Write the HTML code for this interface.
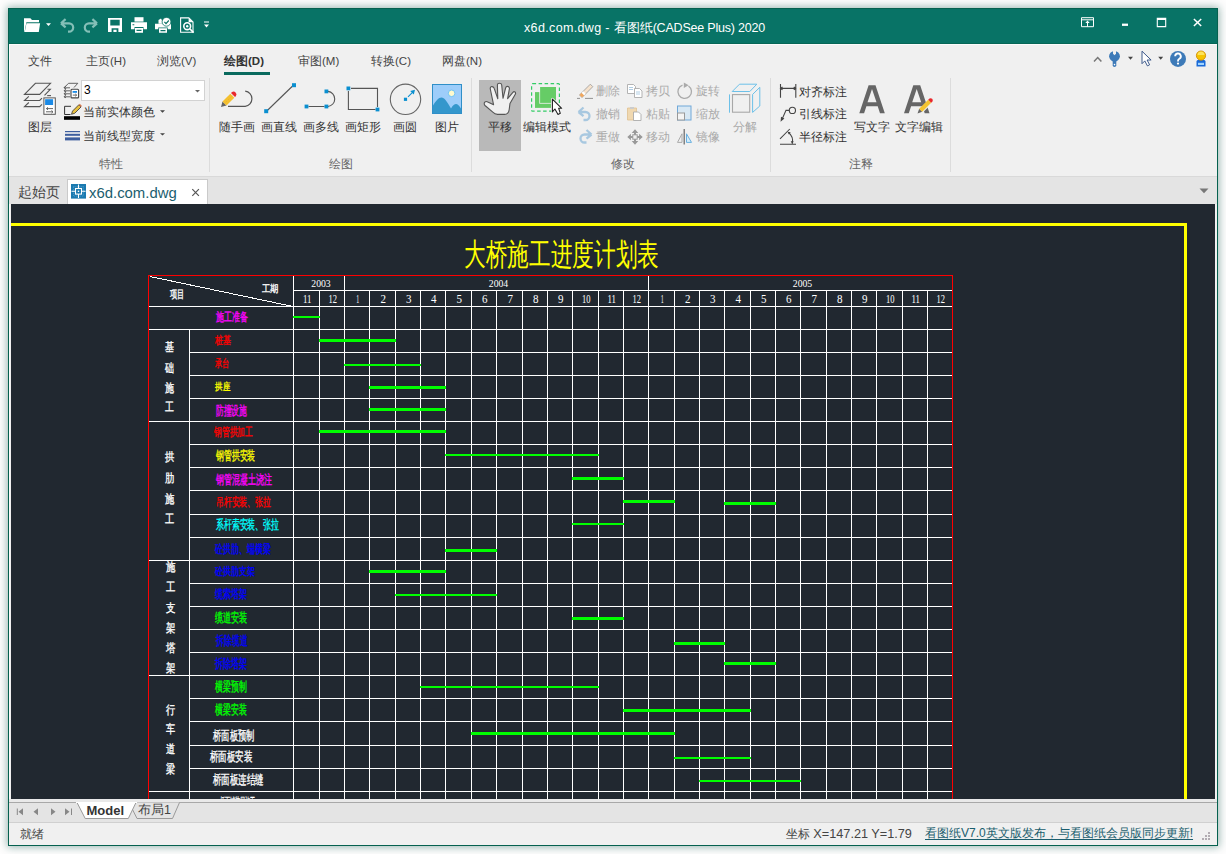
<!DOCTYPE html>
<html><head><meta charset="utf-8">
<style>
*{box-sizing:border-box}
html,body{margin:0;padding:0;width:1226px;height:854px;overflow:hidden;background:#fdfdfd;font-family:"Liberation Sans",sans-serif}
.a{position:absolute}
svg.a{overflow:visible}
#win{left:8px;top:8px;width:1210px;height:838px;background:#f0f0f0;border:1px solid #05614f;box-shadow:0 0 8px 1px rgba(10,80,70,0.42)}
#title{left:8px;top:8px;width:1210px;height:36px;background:#087366;border:1px solid #05614f;border-bottom-color:#066656}
.t{position:absolute;white-space:nowrap;font-size:12px;color:#333;line-height:1}
.m{font-size:11.5px;top:55.5px;color:#444}
.r{font-size:11.5px;color:#333}
.g{font-size:11.5px;color:#666;top:158.5px}
.d{font-size:11.5px;color:#aaa}
</style></head><body>
<div id="win" class="a"></div>
<div id="title" class="a"></div>
<div class="a" style="left:9px;top:44px;width:1208px;height:1px;background:#fbfbfb"></div>
<div class="a" style="left:9px;top:44px;width:1px;height:801px;background:#fbfbfb"></div>
<!--TITLEBAR-->
<svg class="a" style="left:0;top:0" width="220" height="43" viewBox="0 0 220 43">
 <!-- folder -->
 <path d="M24 18.2h6.4l1.6 1.8h7v2.2h-12.6l-1.9 9.8h-0.5z" fill="#fff"/>
 <path d="M26.5 23.2h13.6l-1.3 8.8h-14.1z" fill="#fff"/>
 <path d="M46 23.2h5l-2.5 2.8z" fill="#fff"/>
 <!-- undo -->
 <path d="M61 23.3l4.6-4.2M61 23.3l4.6 4M61.5 23.3h7.5a4.2 4.2 0 0 1 0 8.4h-1" fill="none" stroke="#84bfb7" stroke-width="2.2"/>
 <!-- redo -->
 <path d="M97 23.3l-4.6-4.2M97 23.3l-4.6 4M96.5 23.3h-7.5a4.2 4.2 0 0 0 0 8.4h1" fill="none" stroke="#84bfb7" stroke-width="2.2"/>
 <!-- save -->
 <path d="M108 18h14v14h-14z M110.3 19.8v5.6h9.4v-5.6z M111.6 28.2v3.8h1.8v-2.2h3.2v2.2h1.8v-3.8z" fill="#fff" fill-rule="evenodd"/>
 <!-- printer -->
 <path d="M134.5 17.2h9v4.4h-9z" fill="#fff"/>
 <path d="M131 22.2h16v7h-3.5v-2.2h-9v2.2h-3.5z M132.5 24.3h1.8v1h-1.8z" fill="#fff" fill-rule="evenodd"/>
 <path d="M135 28h8v4.8h-8z M136.5 29.8v1.2h5v-1.2z" fill="#fff" fill-rule="evenodd"/>
 <!-- print check -->
 <path d="M158.5 20l2.5-1.5 1.8 3.2v2h-4.3z" fill="#fff"/>
 <path d="M155 23.8h16v5.4h-3.3v-1.8h-9.4v1.8h-3.3z" fill="#fff"/>
 <path d="M159 28.2h8v4.6h-8z M160.5 30v1.2h5v-1.2z" fill="#fff" fill-rule="evenodd"/>
 <circle cx="166.5" cy="21.8" r="4.4" fill="#fff" stroke="#0a7364" stroke-width="0.8"/>
 <path d="M164.4 21.9l1.6 1.7 2.8-3.1" fill="none" stroke="#0a7364" stroke-width="1.2"/>
 <!-- preview doc -->
 <path d="M180.6 17.9h8.2l4.2 4.2v10.2h-12.4z" fill="none" stroke="#fff" stroke-width="1.1"/>
 <path d="M188.6 18v4.3h4.3z" fill="#fff"/>
 <circle cx="187.2" cy="26.2" r="3.4" fill="none" stroke="#fff" stroke-width="1.6"/>
 <circle cx="187.2" cy="26.2" r="1.2" fill="#fff"/>
 <path d="M189.8 28.8l3.8 3.8" stroke="#fff" stroke-width="1.6"/>
 <!-- customize -->
 <path d="M204 21.6h5v1h-5z M204 24.5h5l-2.5 3z" fill="#fff"/>
</svg>
<div class="t" style="left:524px;top:21.5px;color:#fff;font-size:12.5px"><span style="letter-spacing:0.35px">x6d.com.dwg - </span>看图纸<span style="letter-spacing:-0.2px">(CADSee Plus) 2020</span></div>
<svg class="a" style="left:1070px;top:8px" width="148" height="35" viewBox="1070 8 148 35">
 <path d="M1081.5 17.7h12v9h-12z M1081.5 19.8h12 M1087.5 21.3v5.4" fill="none" stroke="#fff" stroke-width="1"/>
 <path d="M1087.5 20.6l-2.2 2.3h4.4z" fill="#fff"/>
 <path d="M1122 23.6h6v2.3h-6z" fill="#fff"/>
 <path d="M1157.3 18.4h8.4v8.2h-8.4z" fill="none" stroke="#fff" stroke-width="1.1"/>
 <path d="M1157 18h9v2h-9z" fill="#fff"/>
 <path d="M1193.9 19l7.3 7M1201.2 19l-7.3 7" stroke="#fff" stroke-width="1.5"/>
</svg>
<!--RIBBONTABS-->
<div class="t m" style="left:28px">文件</div>
<div class="t m" style="left:86px">主页(H)</div>
<div class="t m" style="left:157px">浏览(V)</div>
<div class="t m" style="left:224px;font-weight:bold;color:#333">绘图(D)</div>
<div class="a" style="left:224px;top:72px;width:46px;height:3px;background:#0a6a5e"></div>
<div class="t m" style="left:298px">审图(M)</div>
<div class="t m" style="left:371px">转换(C)</div>
<div class="t m" style="left:442px">网盘(N)</div>
<!--RIBBON-->
<!-- group separators -->
<div class="a" style="left:209px;top:78px;width:1px;height:94px;background:#dcdcdc"></div>
<div class="a" style="left:471px;top:78px;width:1px;height:94px;background:#dcdcdc"></div>
<div class="a" style="left:770px;top:78px;width:1px;height:94px;background:#dcdcdc"></div>
<div class="a" style="left:950px;top:78px;width:1px;height:94px;background:#dcdcdc"></div>
<!-- group labels -->
<div class="t g" style="left:99px">特性</div>
<div class="t g" style="left:329px">绘图</div>
<div class="t g" style="left:611px">修改</div>
<div class="t g" style="left:849px">注释</div>
<!-- pan highlight -->
<div class="a" style="left:479px;top:80px;width:42px;height:71px;background:#b9b9b9"></div>
<svg class="a" style="left:0;top:0" width="1226" height="176" viewBox="0 0 1226 176">
 <!-- layer big icon -->
 <g fill="none" stroke="#555" stroke-width="1.1">
  <path d="M24.5 94.4L35.4 83.3H50.5L39.7 94.4Z"/>
  <path d="M28.8 96.4L24.5 100.5H39.7L42 98.2"/>
  <path d="M28.8 102.5L24.5 106.6H39.7L42 104.3"/>
  <path d="M44.5 95.3L50.3 89.3H47.5"/>
  <path d="M47.2 95.6H51"/>
 </g>
 <rect x="43.9" y="97.9" width="11.4" height="16.4" fill="#fff" stroke="#555" stroke-width="1"/>
 <rect x="45.1" y="99.2" width="8" height="5.8" fill="#1b8ae6"/>
 <path d="M46.5 108.6h6.5M46.5 108.6l1.5-1.3M46.5 108.6l1.5 1.3M46 111.8h6.5M53 111.8l-1.5-1.3M53 111.8l-1.5 1.3" fill="none" stroke="#555" stroke-width="0.9"/>
 <!-- small layer icon -->
 <g fill="none" stroke="#555" stroke-width="0.9">
  <path d="M64 87.8l4.5-4.5h9.3l-3.8 4.2"/>
  <path d="M64 87.8h6M66 85.8l-2 2 2 1"/>
  <path d="M64 90.8h6M64 93.8h6M64 96.8h6M66 88.8l-2 2 2 1M66 91.8l-2 2 2 1M66 94.8l-2 2 2 1"/>
 </g>
 <rect x="71" y="89.3" width="7.6" height="8.6" rx="1" fill="#fff" stroke="#444" stroke-width="1.1"/>
 <rect x="72.6" y="91" width="4.4" height="1.8" fill="#1b8ae6"/>
 <path d="M72.8 95.1h3.8M75.3 93.9l1.3 1.2-1.3 1.2" fill="none" stroke="#444" stroke-width="0.8"/>
 <!-- combo -->
 <rect x="81.5" y="80.5" width="123" height="20" fill="#fff" stroke="#d2d2d2" stroke-width="1"/>
 <path d="M195 90h5l-2.5 2.6z" fill="#666"/>
 <!-- color icon -->
 <path d="M71 106.3H64.6V114.5H70.5" fill="none" stroke="#333" stroke-width="1"/>
 <path d="M71.5 114.3l1-3.2 6.3-6.3 2.2 2.2-6.3 6.3z" fill="#e8c040" stroke="#333" stroke-width="0.8"/>
 <path d="M78.8 104.8l1-1 2.2 2.2-1 1z" fill="#d77a50"/>
 <rect x="64" y="116.2" width="16" height="3.6" fill="#000"/>
 <path d="M160 110.3h5l-2.5 2.4z M160 133.2h5l-2.5 2.4z" fill="#444"/>
 <!-- linewidth icon -->
 <rect x="65" y="131" width="15" height="1.2" fill="#3d5e9e"/>
 <rect x="65" y="133.8" width="15" height="2" fill="#3d5e9e"/>
 <rect x="65" y="137.4" width="15" height="3" fill="#3d5e9e"/>
 <!-- freehand -->
 <path d="M245.2 91.2a7.6 7.6 0 0 1 0 15.1H228" fill="none" stroke="#555" stroke-width="1.2"/>
 <path d="M221 107l1.5-5.5 4 4z" fill="#666"/>
 <path d="M222.5 101.5l7.8-7.8 4 4-7.8 7.8z" fill="#f4c030"/>
 <path d="M224.5 103.5l7.8-7.8" stroke="#e0a820" stroke-width="0.6" stroke-dasharray="1 1.5"/>
 <path d="M231 93l0.8-0.8a2.85 2.85 0 0 1 4 4l-0.8 0.8z" fill="#e8282c"/>
 <!-- line -->
 <path d="M267.3 110.5L292.6 86" stroke="#555" stroke-width="1.1"/>
 <rect x="264.2" y="109.2" width="4" height="4" fill="#0a8fd0"/>
 <rect x="292" y="83.2" width="4" height="4" fill="#0a8fd0"/>
 <!-- polyline -->
 <path d="M308.5 106.5h16M328 91.4a7.6 7.6 0 0 1 0 15.1" fill="none" stroke="#555" stroke-width="1.1"/>
 <rect x="304.6" y="104.6" width="3.8" height="3.8" fill="#0a8fd0"/>
 <rect x="324.5" y="104.6" width="3.8" height="3.8" fill="#0a8fd0"/>
 <rect x="324.5" y="89.5" width="3.8" height="3.8" fill="#0a8fd0"/>
 <!-- rect -->
 <path d="M351 88.4H377.5V107M375.5 109.5H348.4V91" fill="none" stroke="#555" stroke-width="1.1"/>
 <rect x="346.5" y="86.5" width="3.8" height="3.8" fill="#0a8fd0"/>
 <rect x="375.6" y="107.6" width="3.8" height="3.8" fill="#0a8fd0"/>
 <!-- circle -->
 <circle cx="405.5" cy="99.3" r="15.2" fill="none" stroke="#666" stroke-width="1.1"/>
 <rect x="403.9" y="97.7" width="3.2" height="3.2" fill="#0a8fd0"/>
 <path d="M408 96.8l5.5-5.5" stroke="#0a8fd0" stroke-width="1.1"/>
 <path d="M415 89.8l-1.2 4.8-3.6-3.6z" fill="#0a8fd0"/>
 <!-- image -->
 <rect x="432.5" y="84.5" width="29" height="29" fill="#9dcdfa" stroke="#2f8fc8" stroke-width="1"/>
 <path d="M433 105.5C436 101 438.5 97.5 441.5 97.5S446.5 101 451 108.5C453 105 454.5 104 456 104S459.5 106 461 108.5V113H433z" fill="#3497cc"/>
 <circle cx="451.6" cy="93.3" r="3.3" fill="#fffacd" stroke="#70c4f5" stroke-width="1"/>
 <!-- hand -->
 <path transform="translate(480,80)" d="M13.6 24.8L10.3 9.0C10.0 7.2 11.0 6.4 12.2 6.6C13.4 6.8 14.0 7.6 14.2 8.4L17.8 18.7L17.4 5.0C17.4 3.6 18.3 3.2 19.4 3.2C20.6 3.2 21.6 4.0 21.7 5.0L23.0 18.3L25.6 8.0C26.0 6.6 26.8 6.2 27.7 6.4C28.8 6.6 29.6 7.6 29.4 8.8L27.6 18.7L32.9 12.3C33.5 11.6 34.4 11.5 35.0 12.0C35.7 12.6 35.7 13.5 35.3 14.2L30.0 23.4L29.2 29.5C28.8 32.5 27.0 34.4 24.5 34.4L17.5 34.4C15.5 34.4 14.0 33.5 12.8 32.2L5.0 25.5C4.0 24.6 4.0 23.0 4.8 22.2C5.6 21.4 6.8 21.4 7.8 22.0Z" fill="#f0f0f0" stroke="#555" stroke-width="1.1" stroke-linejoin="round"/>
 <!-- edit mode -->
 <rect x="531.6" y="83.6" width="27.8" height="27.6" rx="1" fill="none" stroke="#33cc66" stroke-width="1.2" stroke-dasharray="3.5 2.5"/>
 <rect x="535" y="92.1" width="16" height="15.8" fill="#66cc66"/>
 <rect x="539.3" y="86.3" width="17.5" height="17.4" fill="#f0f0f0"/>
 <rect x="540.1" y="87" width="15.9" height="15.9" fill="#66cc66"/>
 <path d="M552.4 99.2V111.9L554.9 109L558 114.4L560.3 113.3L558.7 108.3H561.7Z" fill="#fff" stroke="#f4f4f4" stroke-width="2.6" stroke-linejoin="round"/>
 <path d="M552.4 99.2V111.9L554.9 109L558 114.4L560.3 113.3L558.7 108.3H561.7Z" fill="#fff" stroke="#222" stroke-width="1.1" stroke-linejoin="round"/>
 <!-- modify small icons (disabled) -->
 <path d="M577 98.4h3M585 98.4h8" stroke="#888" stroke-width="0.9"/>
 <path d="M582 97.5l-2.5-2.5 10.8-10.8 2.5 2.5z" fill="#f6e2cc" stroke="#999" stroke-width="0.8"/>
 <path d="M582 97.5l-2.5-2.5 2.2-2.2 2.5 2.5z" fill="#f0a860"/>
 <path d="M584.2 95.3l-2.5-2.5 1.5-1.5 2.5 2.5z" fill="#fff"/>
 <path d="M578.5 112l5-4.5M578.5 112l5 4.2M579 112h6.5a4 4 0 0 1 0 8h-2" fill="none" stroke="#a8c8e0" stroke-width="2.3"/>
 <path d="M591.5 134.5l-5-4.5M591.5 134.5l-5 4.2M591 134.5h-6.5a4 4 0 0 0 0 8h2" fill="none" stroke="#a8c8e0" stroke-width="2.3"/>
 <g fill="#fff" stroke="#aaa" stroke-width="0.9">
  <path d="M627.5 84.5h6l2 2v7h-8z"/>
  <path d="M634.5 88.5h5l2.5 2.5v6.5h-7.5z"/>
 </g>
 <path d="M629 87.5h4M629 89.5h4M636 92h4M636 94h4" stroke="#9cc0dc" stroke-width="0.8"/>
 <path d="M627.5 108h9v12h-9z" fill="#f0d8b0" stroke="#e0c090" stroke-width="0.8"/>
 <path d="M630 107h4v2h-4z" fill="#ccc"/>
 <path d="M633.5 112h5l2.5 2.5v6h-7.5z" fill="#fff" stroke="#aaa" stroke-width="0.9"/>
 <path d="M630 137h10M635 132v10" stroke="#999" stroke-width="2"/>
 <path d="M627.3 137l3.6-3.3v6.6zM642.7 137l-3.6-3.3v6.6zM635 129.3l-3.3 3.6h6.6zM635 144.7l-3.3-3.6h6.6z" fill="#999"/>
 <rect x="632.8" y="134.8" width="4.4" height="4.4" fill="#f0f0f0" stroke="#999" stroke-width="1"/>
 <path d="M682.5 85.2A6.8 6.8 0 1 0 688.5 86" fill="none" stroke="#aaa" stroke-width="1.3"/>
 <path d="M683.8 82.6v5.4l4.8-2.7z" fill="#aaa"/>
 <rect x="677.5" y="106" width="13.5" height="14" fill="#d8e8f4" stroke="#70a8d8" stroke-width="1"/>
 <rect x="677.5" y="113" width="7" height="7" fill="#f4f4f4" stroke="#999" stroke-width="1"/>
 <path d="M684.2 129v15.5" stroke="#666" stroke-width="1.2"/>
 <path d="M682 142.4h-4.5l4.5-8.6z" fill="none" stroke="#aaa" stroke-width="1"/>
 <path d="M686.5 142.4h5l-5-8.6z" fill="#d6ecf8" stroke="#6ab0e0" stroke-width="1"/>
 <!-- explode cube -->
 <path d="M729.5 94.4V112.7M732.2 91.5L739.5 84.2H756.8L749.8 91.5ZM752.6 94.4L759.8 87.3V106L752.6 112.4Z" fill="none" stroke="#6cc0e8" stroke-width="1"/>
 <rect x="732.5" y="94.6" width="17.2" height="17.6" fill="none" stroke="#a8a8a8" stroke-width="1.1"/>
 <!-- annotation icons -->
 <path d="M780.5 84v13.8M795.8 84v13.8M780.5 88.4h15.3M782.5 87l-2 1.4 2 1.4M793.8 87l2 1.4-2 1.4" fill="none" stroke="#444" stroke-width="1.1"/>
 <circle cx="792.4" cy="110.4" r="3.1" fill="none" stroke="#444" stroke-width="1.1"/>
 <path d="M789.2 110.4h-3.2l-4.2 9.5" fill="none" stroke="#444" stroke-width="1.1"/>
 <path d="M780.6 121.8l0.4-5 3.4 1.6z" fill="#444"/>
 <path d="M780 138.8L789.8 129M780 144.3H796M788.5 132.5a11 11 0 0 1 3.8 11" fill="none" stroke="#444" stroke-width="1.05"/>
 <path d="M787.5 131.8l3.2 0.5-1.8 2.2zM792.3 144l-1.6-2.8h3z" fill="#444"/>
 <!-- big A icons -->
 <path d="M859.3 113.2L868.6 85.3h6.9L884.8 113.2h-4.8l-2.3-6.9h-11.3l-2.3 6.9zM867.5 102.3h9l-4.5-13.3z" fill="#666" fill-rule="evenodd"/>
 <path d="M904 113.2L913.3 85.3h6.9L929.5 113.2h-4.8l-2.3-6.9h-11.3l-2.3 6.9zM912.2 102.3h9l-4.5-13.3z" fill="#666" fill-rule="evenodd"/>
 <path d="M917 111.5l11.5-11.5 3.4 3.4-11.5 11.5z" fill="#f0f0f0"/>
 <path d="M917.5 113.5l1.7-4.7 3 3z" fill="#666"/>
 <path d="M919.2 108.8l9-9 3 3-9 9z" fill="#f4c430"/>
 <path d="M928.2 99.8l1.3-1.3a2.2 2.2 0 0 1 3 3l-1.3 1.3z" fill="#e8282c"/>
 <!-- top right icons -->
 <path d="M1094 61.5l3.7-4 3.7 4" fill="none" stroke="#777" stroke-width="1.5"/>
 <circle cx="1114.5" cy="56.3" r="5.4" fill="#3d7ab8"/>
 <path d="M1112.7 58h3.6v7.3a1.8 1.8 0 0 1-3.6 0z" fill="#3d7ab8"/>
 <path d="M1113 50.5h3v3.2l-1.5 1.6-1.5-1.6z" fill="#f0f0f0"/>
 <circle cx="1114.5" cy="64.6" r="0.8" fill="#fff"/>
 <path d="M1128 56.8h5l-2.5 3z M1158.2 56.8h5l-2.5 3z" fill="#444"/>
 <path d="M1142 51.2v12.5l2.8-2.8 2.6 5 2.2-1.1-2.5-4.8h4z" fill="#fff" stroke="#2a4a80" stroke-width="0.9"/>
 <circle cx="1178" cy="58.9" r="8" fill="#3d7ab8"/>
 <path d="M1175.2 56.3a2.8 2.8 0 1 1 4.2 2.4c-1 0.6-1.4 1.2-1.4 2.2v0.6" fill="none" stroke="#fff" stroke-width="1.9"/>
 <circle cx="1178" cy="63.6" r="1.1" fill="#fff"/>
 <path d="M1196.5 61.5c0-1 0.8-1.6 1.8-1.6h5.4c1 0 1.8 0.6 1.8 1.6v5h-9z" fill="#1a6ad8"/>
 <rect x="1198" y="62.8" width="6" height="2.2" fill="#9fd4ff"/>
 <circle cx="1201" cy="55.6" r="4.6" fill="#f5c400" stroke="#d08a00" stroke-width="0.9"/>
 <path d="M1197.5 55a3.5 3.5 0 0 1 7 0z" fill="#fde35a"/>
</svg>
<!-- ribbon texts -->
<div class="t r" style="left:28px;top:121.5px">图层</div>
<div class="t" style="left:84px;top:84px;font-size:12px;color:#000">3</div>
<div class="t r" style="left:83px;top:107.2px">当前实体颜色</div>
<div class="t r" style="left:83px;top:130.7px">当前线型宽度</div>
<div class="t r" style="left:219px;top:121.5px">随手画</div>
<div class="t r" style="left:261px;top:121.5px">画直线</div>
<div class="t r" style="left:303px;top:121.5px">画多线</div>
<div class="t r" style="left:345px;top:121.5px">画矩形</div>
<div class="t r" style="left:393px;top:121.5px">画圆</div>
<div class="t r" style="left:435px;top:121.5px">图片</div>
<div class="t r" style="left:488px;top:121.5px">平移</div>
<div class="t r" style="left:523px;top:121.5px">编辑模式</div>
<div class="t d" style="left:596px;top:86.3px">删除</div>
<div class="t d" style="left:596px;top:109.3px">撤销</div>
<div class="t d" style="left:596px;top:132.3px">重做</div>
<div class="t d" style="left:646px;top:86.3px">拷贝</div>
<div class="t d" style="left:646px;top:109.3px">粘贴</div>
<div class="t d" style="left:646px;top:132.3px">移动</div>
<div class="t d" style="left:696px;top:86.3px">旋转</div>
<div class="t d" style="left:696px;top:109.3px">缩放</div>
<div class="t d" style="left:696px;top:132.3px">镜像</div>
<div class="t d" style="left:733px;top:121.5px">分解</div>
<div class="t r" style="left:799px;top:87.3px">对齐标注</div>
<div class="t r" style="left:799px;top:109.3px">引线标注</div>
<div class="t r" style="left:799px;top:132.3px">半径标注</div>
<div class="t r" style="left:854px;top:121.5px">写文字</div>
<div class="t r" style="left:895px;top:121.5px">文字编辑</div>

<!--TABBAR-->
<div class="a" style="left:9px;top:176px;width:1208px;height:1px;background:#d9d9d9"></div>
<div class="a" style="left:9px;top:177px;width:1208px;height:27px;background:#e4e4e4"></div>
<div class="t" style="left:18px;top:185.5px;font-size:13.5px;color:#444">起始页</div>
<div class="a" style="left:67px;top:179px;width:141px;height:25px;background:#fff;border:1px solid #cacaca;border-bottom:none"></div>
<svg class="a" style="left:0;top:170px" width="220" height="34" viewBox="0 170 220 34">
 <rect x="71" y="184" width="15" height="14.6" fill="#1a7ab0"/>
 <rect x="73.5" y="186.5" width="10" height="9.6" fill="none" stroke="#7fc0e8" stroke-width="0.6" stroke-dasharray="0.8 1.2"/>
 <rect x="75.5" y="188.5" width="6" height="5.6" fill="none" stroke="#fff" stroke-width="1.1"/>
 <path d="M78.5 184.5v4M78.5 194.1v4M71.5 191.3h4M81.5 191.3h4" stroke="#fff" stroke-width="1.1"/>
 <rect x="77.8" y="190.6" width="1.4" height="1.4" fill="#fff"/>
 <path d="M192.3 189.2l6.6 6.6M198.9 189.2l-6.6 6.6" stroke="#555" stroke-width="1.2"/>
</svg>
<svg class="a" style="left:1190px;top:180px" width="30" height="20" viewBox="1190 180 30 20"><path d="M1199.5 188.5h9l-4.5 4.8z" fill="#777"/></svg>
<div class="t" style="left:89px;top:185.5px;font-size:14.9px;color:#1b5e6e">x6d.com.dwg</div>
<svg id="cad" width="1226" height="854" viewBox="0 0 1226 854" style="position:absolute;left:0;top:0">
<defs><clipPath id="dc"><rect x="11" y="204" width="1204" height="595"/></clipPath></defs>
<rect x="11" y="204" width="1204" height="595" fill="#212830"/>
<g clip-path="url(#dc)" shape-rendering="crispEdges">
<rect x="11" y="223" width="1176" height="3" fill="#ffff00"/>
<rect x="1184" y="223" width="3" height="600" fill="#ffff00"/>
<rect x="148" y="306" width="805" height="1" fill="#ffffff"/><rect x="148" y="329" width="805" height="1" fill="#ffffff"/><rect x="189" y="352" width="764" height="1" fill="#ffffff"/><rect x="189" y="375" width="764" height="1" fill="#ffffff"/><rect x="189" y="398" width="764" height="1" fill="#ffffff"/><rect x="148" y="421" width="805" height="1" fill="#ffffff"/><rect x="189" y="444" width="764" height="1" fill="#ffffff"/><rect x="189" y="467" width="764" height="1" fill="#ffffff"/><rect x="189" y="490" width="764" height="1" fill="#ffffff"/><rect x="189" y="514" width="764" height="1" fill="#ffffff"/><rect x="189" y="537" width="764" height="1" fill="#ffffff"/><rect x="148" y="560" width="805" height="1" fill="#ffffff"/><rect x="189" y="583" width="764" height="1" fill="#ffffff"/><rect x="189" y="606" width="764" height="1" fill="#ffffff"/><rect x="189" y="629" width="764" height="1" fill="#ffffff"/><rect x="189" y="652" width="764" height="1" fill="#ffffff"/><rect x="148" y="675" width="805" height="1" fill="#ffffff"/><rect x="189" y="698" width="764" height="1" fill="#ffffff"/><rect x="189" y="721" width="764" height="1" fill="#ffffff"/><rect x="189" y="745" width="764" height="1" fill="#ffffff"/><rect x="189" y="768" width="764" height="1" fill="#ffffff"/><rect x="148" y="791" width="805" height="1" fill="#ffffff"/><rect x="293" y="290" width="660" height="1" fill="#ffffff"/><rect x="293" y="275" width="1" height="556" fill="#ffffff"/><rect x="319" y="290" width="1" height="541" fill="#ffffff"/><rect x="344" y="275" width="1" height="556" fill="#ffffff"/><rect x="369" y="290" width="1" height="541" fill="#ffffff"/><rect x="395" y="290" width="1" height="541" fill="#ffffff"/><rect x="420" y="290" width="1" height="541" fill="#ffffff"/><rect x="445" y="290" width="1" height="541" fill="#ffffff"/><rect x="471" y="290" width="1" height="541" fill="#ffffff"/><rect x="496" y="290" width="1" height="541" fill="#ffffff"/><rect x="522" y="290" width="1" height="541" fill="#ffffff"/><rect x="547" y="290" width="1" height="541" fill="#ffffff"/><rect x="572" y="290" width="1" height="541" fill="#ffffff"/><rect x="598" y="290" width="1" height="541" fill="#ffffff"/><rect x="623" y="290" width="1" height="541" fill="#ffffff"/><rect x="648" y="275" width="1" height="556" fill="#ffffff"/><rect x="674" y="290" width="1" height="541" fill="#ffffff"/><rect x="699" y="290" width="1" height="541" fill="#ffffff"/><rect x="724" y="290" width="1" height="541" fill="#ffffff"/><rect x="750" y="290" width="1" height="541" fill="#ffffff"/><rect x="775" y="290" width="1" height="541" fill="#ffffff"/><rect x="800" y="290" width="1" height="541" fill="#ffffff"/><rect x="826" y="290" width="1" height="541" fill="#ffffff"/><rect x="851" y="290" width="1" height="541" fill="#ffffff"/><rect x="876" y="290" width="1" height="541" fill="#ffffff"/><rect x="902" y="290" width="1" height="541" fill="#ffffff"/><rect x="927" y="290" width="1" height="541" fill="#ffffff"/><rect x="189" y="329" width="1" height="502" fill="#ffffff"/>
<rect x="148" y="275" width="805" height="1" fill="#ff0000"/>
<rect x="148" y="275" width="1" height="555" fill="#ff0000"/>
<rect x="952" y="275" width="1" height="555" fill="#ff0000"/>
</g>
<g clip-path="url(#dc)" shape-rendering="crispEdges">
<line x1="150" y1="276.5" x2="293" y2="306.5" stroke="#fff" stroke-width="1"/>
<rect x="293" y="316" width="27" height="2" fill="#00ff00"/>
<rect x="319" y="339" width="77" height="3" fill="#00ff00"/>
<rect x="344" y="364" width="77" height="2" fill="#00ff00"/>
<rect x="369" y="386" width="77" height="3" fill="#00ff00"/>
<rect x="369" y="408" width="77" height="3" fill="#00ff00"/>
<rect x="319" y="430" width="127" height="3" fill="#00ff00"/>
<rect x="445" y="454" width="154" height="2" fill="#00ff00"/>
<rect x="572" y="477" width="52" height="3" fill="#00ff00"/>
<rect x="623" y="500" width="52" height="3" fill="#00ff00"/>
<rect x="724" y="502" width="52" height="3" fill="#00ff00"/>
<rect x="572" y="523" width="52" height="2" fill="#00ff00"/>
<rect x="445" y="549" width="52" height="3" fill="#00ff00"/>
<rect x="369" y="570" width="77" height="3" fill="#00ff00"/>
<rect x="395" y="594" width="102" height="2" fill="#00ff00"/>
<rect x="572" y="617" width="52" height="3" fill="#00ff00"/>
<rect x="674" y="642" width="51" height="3" fill="#00ff00"/>
<rect x="724" y="662" width="52" height="3" fill="#00ff00"/>
<rect x="420" y="686" width="179" height="2" fill="#00ff00"/>
<rect x="623" y="709" width="128" height="3" fill="#00ff00"/>
<rect x="471" y="732" width="204" height="3" fill="#00ff00"/>
<rect x="674" y="757" width="77" height="2" fill="#00ff00"/>
<rect x="699" y="780" width="102" height="2" fill="#00ff00"/>
</g>
<g clip-path="url(#dc)" font-family="Liberation Sans, sans-serif"><text x="464" y="265" font-size="31" textLength="195" lengthAdjust="spacingAndGlyphs" fill="#ffff00">大桥施工进度计划表</text><text x="170" y="297.6" font-size="11.1" textLength="14.3" lengthAdjust="spacingAndGlyphs" fill="#ffffff" stroke="#ffffff" stroke-width="0.35" font-weight="normal">项目</text><text x="261.7" y="291.8" font-size="9.9" textLength="16.7" lengthAdjust="spacingAndGlyphs" fill="#ffffff" stroke="#ffffff" stroke-width="0.35" font-weight="normal">工期</text><text x="215.9" y="321.3" font-size="12.4" textLength="32.1" lengthAdjust="spacingAndGlyphs" fill="#ff00ff" stroke="#ff00ff" stroke-width="0.35" font-weight="normal">施工准备</text><text x="215" y="343.5" font-size="11.2" textLength="16.0" lengthAdjust="spacingAndGlyphs" fill="#ff0000" stroke="#ff0000" stroke-width="0.35" font-weight="normal">桩基</text><text x="215" y="366.7" font-size="11.2" textLength="14.3" lengthAdjust="spacingAndGlyphs" fill="#ff0000" stroke="#ff0000" stroke-width="0.35" font-weight="normal">承台</text><text x="215" y="390.0" font-size="10.3" textLength="15.0" lengthAdjust="spacingAndGlyphs" fill="#ffff00" stroke="#ffff00" stroke-width="0.35" font-weight="normal">拱座</text><text x="215.9" y="415.0" font-size="13.0" textLength="31.2" lengthAdjust="spacingAndGlyphs" fill="#ff00ff" stroke="#ff00ff" stroke-width="0.35" font-weight="normal">防撞设施</text><text x="214.2" y="436.2" font-size="12.4" textLength="38.8" lengthAdjust="spacingAndGlyphs" fill="#ff0000" stroke="#ff0000" stroke-width="0.35" font-weight="normal">钢管拱加工</text><text x="215.8" y="459.6" font-size="13.3" textLength="39.6" lengthAdjust="spacingAndGlyphs" fill="#ffff00" stroke="#ffff00" stroke-width="0.35" font-weight="normal">钢管拱安装</text><text x="215.8" y="483.8" font-size="13.3" textLength="56.2" lengthAdjust="spacingAndGlyphs" fill="#ff00ff" stroke="#ff00ff" stroke-width="0.35" font-weight="normal">钢管混凝土浇注</text><text x="215.8" y="505.7" font-size="12.4" textLength="55.0" lengthAdjust="spacingAndGlyphs" fill="#ff0000" stroke="#ff0000" stroke-width="0.35" font-weight="normal">吊杆安装、张拉</text><text x="215.8" y="528.9" font-size="12.5" textLength="63.4" lengthAdjust="spacingAndGlyphs" fill="#00ffff" stroke="#00ffff" stroke-width="0.35" font-weight="normal">系杆索安装、张拉</text><text x="215" y="552.6" font-size="12.4" textLength="55.8" lengthAdjust="spacingAndGlyphs" fill="#0000ff" stroke="#0000ff" stroke-width="0.35" font-weight="normal">砼拱肋、端横梁</text><text x="214.9" y="575.4" font-size="10.8" textLength="40.3" lengthAdjust="spacingAndGlyphs" fill="#0000ff" stroke="#0000ff" stroke-width="0.35" font-weight="normal">砼拱肋支架</text><text x="214.9" y="598.2" font-size="12.2" textLength="32.5" lengthAdjust="spacingAndGlyphs" fill="#0000ff" stroke="#0000ff" stroke-width="0.35" font-weight="normal">缆索塔架</text><text x="214.9" y="622.0" font-size="12.7" textLength="32.5" lengthAdjust="spacingAndGlyphs" fill="#00ff00" stroke="#00ff00" stroke-width="0.35" font-weight="normal">缆道安装</text><text x="216.2" y="645.0" font-size="12.7" textLength="31.2" lengthAdjust="spacingAndGlyphs" fill="#0000ff" stroke="#0000ff" stroke-width="0.35" font-weight="normal">拆除缆道</text><text x="214.9" y="667.9" font-size="12.7" textLength="32.5" lengthAdjust="spacingAndGlyphs" fill="#0000ff" stroke="#0000ff" stroke-width="0.35" font-weight="normal">拆除塔架</text><text x="214.9" y="690.9" font-size="12.7" textLength="31.7" lengthAdjust="spacingAndGlyphs" fill="#00ff00" stroke="#00ff00" stroke-width="0.35" font-weight="normal">横梁预制</text><text x="215.1" y="713.8" font-size="12.9" textLength="31.6" lengthAdjust="spacingAndGlyphs" fill="#00ff00" stroke="#00ff00" stroke-width="0.35" font-weight="normal">横梁安装</text><text x="213" y="739.6" font-size="12.7" textLength="41.5" lengthAdjust="spacingAndGlyphs" fill="#ffffff" stroke="#ffffff" stroke-width="0.35" font-weight="normal">桥面板预制</text><text x="209.8" y="760.8" font-size="12.7" textLength="42.6" lengthAdjust="spacingAndGlyphs" fill="#ffffff" stroke="#ffffff" stroke-width="0.35" font-weight="normal">桥面板安装</text><text x="212.8" y="783.9" font-size="12.5" textLength="50.8" lengthAdjust="spacingAndGlyphs" fill="#ffffff" stroke="#ffffff" stroke-width="0.35" font-weight="normal">桥面板连结缝</text><text x="219.6" y="807.4" font-size="12.7" textLength="35.4" lengthAdjust="spacingAndGlyphs" fill="#ffffff" stroke="#ffffff" stroke-width="0.35" font-weight="normal">桥面铺装层施工</text><text x="165.4" y="351.4" font-size="12.1" textLength="9.0" lengthAdjust="spacingAndGlyphs" fill="#ffffff" stroke="#ffffff" stroke-width="0.35" font-weight="normal">基</text><text x="165.4" y="371.9" font-size="12.1" textLength="9.0" lengthAdjust="spacingAndGlyphs" fill="#ffffff" stroke="#ffffff" stroke-width="0.35" font-weight="normal">础</text><text x="165.4" y="391.7" font-size="12.1" textLength="9.0" lengthAdjust="spacingAndGlyphs" fill="#ffffff" stroke="#ffffff" stroke-width="0.35" font-weight="normal">施</text><text x="165.4" y="411.4" font-size="12.1" textLength="9.0" lengthAdjust="spacingAndGlyphs" fill="#ffffff" stroke="#ffffff" stroke-width="0.35" font-weight="normal">工</text><text x="165.3" y="461.4" font-size="12.1" textLength="9.3" lengthAdjust="spacingAndGlyphs" fill="#ffffff" stroke="#ffffff" stroke-width="0.35" font-weight="normal">拱</text><text x="165.3" y="481.9" font-size="12.1" textLength="9.3" lengthAdjust="spacingAndGlyphs" fill="#ffffff" stroke="#ffffff" stroke-width="0.35" font-weight="normal">肋</text><text x="165.3" y="503.0" font-size="12.1" textLength="9.3" lengthAdjust="spacingAndGlyphs" fill="#ffffff" stroke="#ffffff" stroke-width="0.35" font-weight="normal">施</text><text x="165.3" y="523.4" font-size="12.1" textLength="9.3" lengthAdjust="spacingAndGlyphs" fill="#ffffff" stroke="#ffffff" stroke-width="0.35" font-weight="normal">工</text><text x="166.2" y="571.1" font-size="12.1" textLength="9.4" lengthAdjust="spacingAndGlyphs" fill="#ffffff" stroke="#ffffff" stroke-width="0.35" font-weight="normal">施</text><text x="166.2" y="591.4" font-size="12.1" textLength="9.4" lengthAdjust="spacingAndGlyphs" fill="#ffffff" stroke="#ffffff" stroke-width="0.35" font-weight="normal">工</text><text x="166.2" y="611.8" font-size="12.1" textLength="9.4" lengthAdjust="spacingAndGlyphs" fill="#ffffff" stroke="#ffffff" stroke-width="0.35" font-weight="normal">支</text><text x="166.2" y="631.9" font-size="12.1" textLength="9.4" lengthAdjust="spacingAndGlyphs" fill="#ffffff" stroke="#ffffff" stroke-width="0.35" font-weight="normal">架</text><text x="166.2" y="652.4" font-size="12.1" textLength="9.4" lengthAdjust="spacingAndGlyphs" fill="#ffffff" stroke="#ffffff" stroke-width="0.35" font-weight="normal">塔</text><text x="166.2" y="671.8" font-size="12.1" textLength="9.4" lengthAdjust="spacingAndGlyphs" fill="#ffffff" stroke="#ffffff" stroke-width="0.35" font-weight="normal">架</text><text x="166" y="713.7" font-size="12.1" textLength="9.1" lengthAdjust="spacingAndGlyphs" fill="#ffffff" stroke="#ffffff" stroke-width="0.35" font-weight="normal">行</text><text x="166" y="733.4" font-size="12.1" textLength="9.1" lengthAdjust="spacingAndGlyphs" fill="#ffffff" stroke="#ffffff" stroke-width="0.35" font-weight="normal">车</text><text x="166" y="753.0" font-size="12.1" textLength="9.1" lengthAdjust="spacingAndGlyphs" fill="#ffffff" stroke="#ffffff" stroke-width="0.35" font-weight="normal">道</text><text x="166" y="773.0" font-size="12.1" textLength="9.1" lengthAdjust="spacingAndGlyphs" fill="#ffffff" stroke="#ffffff" stroke-width="0.35" font-weight="normal">梁</text><text x="311.3" y="286.8" font-family="Liberation Serif" font-size="11.2" textLength="19.4" lengthAdjust="spacingAndGlyphs" fill="#fff">2003</text><text x="488.8" y="286.8" font-family="Liberation Serif" font-size="11.2" textLength="19.4" lengthAdjust="spacingAndGlyphs" fill="#fff">2004</text><text x="792.8" y="286.8" font-family="Liberation Serif" font-size="11.2" textLength="19.4" lengthAdjust="spacingAndGlyphs" fill="#fff">2005</text><text x="302.9" y="302.8" font-family="Liberation Serif" font-size="11.6" textLength="8.5" lengthAdjust="spacingAndGlyphs" fill="#fff">11</text><text x="328.4" y="302.8" font-family="Liberation Serif" font-size="11.6" textLength="8.5" lengthAdjust="spacingAndGlyphs" fill="#fff">12</text><text x="356.2" y="302.8" font-family="Liberation Serif" font-size="11.6" textLength="3.0" lengthAdjust="spacingAndGlyphs" fill="#fff">1</text><text x="380.4" y="302.8" font-family="Liberation Serif" font-size="11.6" textLength="5.5" lengthAdjust="spacingAndGlyphs" fill="#fff">2</text><text x="405.9" y="302.8" font-family="Liberation Serif" font-size="11.6" textLength="5.5" lengthAdjust="spacingAndGlyphs" fill="#fff">3</text><text x="430.9" y="302.8" font-family="Liberation Serif" font-size="11.6" textLength="5.5" lengthAdjust="spacingAndGlyphs" fill="#fff">4</text><text x="456.4" y="302.8" font-family="Liberation Serif" font-size="11.6" textLength="5.5" lengthAdjust="spacingAndGlyphs" fill="#fff">5</text><text x="481.9" y="302.8" font-family="Liberation Serif" font-size="11.6" textLength="5.5" lengthAdjust="spacingAndGlyphs" fill="#fff">6</text><text x="507.4" y="302.8" font-family="Liberation Serif" font-size="11.6" textLength="5.5" lengthAdjust="spacingAndGlyphs" fill="#fff">7</text><text x="533.0" y="302.8" font-family="Liberation Serif" font-size="11.6" textLength="5.5" lengthAdjust="spacingAndGlyphs" fill="#fff">8</text><text x="558.0" y="302.8" font-family="Liberation Serif" font-size="11.6" textLength="5.5" lengthAdjust="spacingAndGlyphs" fill="#fff">9</text><text x="582.0" y="302.8" font-family="Liberation Serif" font-size="11.6" textLength="8.5" lengthAdjust="spacingAndGlyphs" fill="#fff">10</text><text x="607.5" y="302.8" font-family="Liberation Serif" font-size="11.6" textLength="8.5" lengthAdjust="spacingAndGlyphs" fill="#fff">11</text><text x="632.5" y="302.8" font-family="Liberation Serif" font-size="11.6" textLength="8.5" lengthAdjust="spacingAndGlyphs" fill="#fff">12</text><text x="660.7" y="302.8" font-family="Liberation Serif" font-size="11.6" textLength="3.0" lengthAdjust="spacingAndGlyphs" fill="#fff">1</text><text x="685.0" y="302.8" font-family="Liberation Serif" font-size="11.6" textLength="5.5" lengthAdjust="spacingAndGlyphs" fill="#fff">2</text><text x="710.0" y="302.8" font-family="Liberation Serif" font-size="11.6" textLength="5.5" lengthAdjust="spacingAndGlyphs" fill="#fff">3</text><text x="735.5" y="302.8" font-family="Liberation Serif" font-size="11.6" textLength="5.5" lengthAdjust="spacingAndGlyphs" fill="#fff">4</text><text x="761.0" y="302.8" font-family="Liberation Serif" font-size="11.6" textLength="5.5" lengthAdjust="spacingAndGlyphs" fill="#fff">5</text><text x="786.0" y="302.8" font-family="Liberation Serif" font-size="11.6" textLength="5.5" lengthAdjust="spacingAndGlyphs" fill="#fff">6</text><text x="811.5" y="302.8" font-family="Liberation Serif" font-size="11.6" textLength="5.5" lengthAdjust="spacingAndGlyphs" fill="#fff">7</text><text x="837.0" y="302.8" font-family="Liberation Serif" font-size="11.6" textLength="5.5" lengthAdjust="spacingAndGlyphs" fill="#fff">8</text><text x="862.0" y="302.8" font-family="Liberation Serif" font-size="11.6" textLength="5.5" lengthAdjust="spacingAndGlyphs" fill="#fff">9</text><text x="886.0" y="302.8" font-family="Liberation Serif" font-size="11.6" textLength="8.5" lengthAdjust="spacingAndGlyphs" fill="#fff">10</text><text x="911.5" y="302.8" font-family="Liberation Serif" font-size="11.6" textLength="8.5" lengthAdjust="spacingAndGlyphs" fill="#fff">11</text><text x="936.5" y="302.8" font-family="Liberation Serif" font-size="11.6" textLength="8.5" lengthAdjust="spacingAndGlyphs" fill="#fff">12</text></g>
</svg>
<!--BOTTOM-->
<div class="a" style="left:9px;top:799px;width:1208px;height:3px;background:#e9e9e9"></div>
<div class="a" style="left:9px;top:802px;width:1208px;height:1px;background:#a8a8a8"></div>
<div class="a" style="left:9px;top:803px;width:1208px;height:19px;background:#e4e4e4"></div>
<div class="a" style="left:9px;top:822px;width:1208px;height:1px;background:#d0d0d0"></div>
<div class="a" style="left:9px;top:823px;width:1208px;height:22px;background:#f0f0f0"></div>
<svg class="a" style="left:0;top:795px" width="200" height="30" viewBox="0 795 200 30">
 <path d="M129 802.5L137 818.5H172.5L179.5 802.5" fill="#e4e4e4" stroke="#9a9a9a" stroke-width="1"/>
 <path d="M77 802.5L85.2 818.5H128.3L136 802.5" fill="#fff" stroke="#9a9a9a" stroke-width="1"/>
 <path d="M76 802.5H137" stroke="#fff" stroke-width="1"/>
 <path d="M17.3 808.5v6.5" stroke="#888" stroke-width="1"/>
 <path d="M23 808.3v7l-4.5-3.5z M38 808.3v7l-4.5-3.5z M51 808.3v7l4.5-3.5z M65 808.3v7l4.5-3.5z" fill="#888"/>
 <path d="M71.5 808.5v6.5" stroke="#888" stroke-width="1"/>
</svg>
<div class="t" style="left:86.5px;top:804px;font-size:13px;font-weight:bold;color:#333">Model</div>
<div class="t" style="left:138px;top:804px;font-size:12.5px;color:#444">布局1</div>
<div class="t" style="left:20px;top:828px;font-size:12px;color:#444">就绪</div>
<div class="t" style="left:786px;top:827.5px;font-size:12px;color:#444">坐标 <span style="font-size:12.7px">X=147.21 Y=1.79</span></div>
<div class="t" style="left:925px;top:827px;font-size:12px;color:#1b5e6e;text-decoration:underline;text-underline-offset:2px">看图纸V7.0英文版发布，与看图纸会员版同步更新!</div>
<svg class="a" style="left:1200px;top:830px" width="16" height="14" viewBox="1200 830 16 14"><path d="M1208 832h2v2h-2zM1205 835h2v2h-2zM1208 835h2v2h-2zM1202 838h2v2h-2zM1205 838h2v2h-2zM1208 838h2v2h-2z" fill="#b2acb2"/></svg>
</body></html>
